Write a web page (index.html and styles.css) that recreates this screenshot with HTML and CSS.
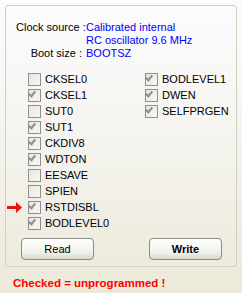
FILE: index.html
```html
<html lang="en">
<head>
    <meta charset="UTF-8">
    <title>Fuses</title>
    <link rel="stylesheet" href="styles.css">
</head>
<body>
    <div class="page">
        <div class="group">
            <div class="info">
                <span class="lbl">Clock source :</span>
                <span class="val">Calibrated internal<br>RC oscillator 9.6 MHz</span>
                <span class="lbl">Boot size :</span>
                <span class="val">BOOTSZ</span>
            </div>

            <div class="fuses">
                <div class="col">
                    <label class="fuse"><span class="box"></span>CKSEL0</label>
                    <label class="fuse"><span class="box on"></span>CKSEL1</label>
                    <label class="fuse"><span class="box"></span>SUT0</label>
                    <label class="fuse"><span class="box on"></span>SUT1</label>
                    <label class="fuse"><span class="box on"></span>CKDIV8</label>
                    <label class="fuse"><span class="box on"></span>WDTON</label>
                    <label class="fuse"><span class="box"></span>EESAVE</label>
                    <label class="fuse"><span class="box"></span>SPIEN</label>
                    <label class="fuse"><span class="box on"></span>RSTDISBL</label>
                    <label class="fuse"><span class="box on"></span>BODLEVEL0</label>
                </div>
                <div class="col">
                    <label class="fuse"><span class="box on"></span>BODLEVEL1</label>
                    <label class="fuse"><span class="box on"></span>DWEN</label>
                    <label class="fuse"><span class="box on"></span>SELFPRGEN</label>
                </div>
            </div>

            <div class="btns">
                <button class="btn">Read</button>
                <button class="btn bold">Write</button>
            </div>
        </div>

        <div class="note">Checked = unprogrammed !</div>

        <svg class="arrow" width="16" height="11" viewBox="0 0 16 11">
            <polygon points="0,4 9,4 9,0 15,5.5 9,11 9,7 0,7" fill="#ee1111"/>
        </svg>
    </div>
</body>
</html>
```

FILE: styles.css
```css
body{
    margin: 0;
    font-family: "Liberation Sans", Arial, sans-serif;
    font-size: 11px;
    color: #000;
}
.page{
    width: 242px;
    height: 293px;
    position: relative;
    background: linear-gradient(#fcfcfe, #f4f3ee 50%, #ece9d8);
    overflow: hidden;
}
.group{
    box-sizing: border-box;
    margin: 5px 5px 0 5px;
    height: 262px;
    border: 1px solid #d0d0bf;
    border-radius: 3px;
}
.info{
    display: grid;
    grid-template-columns: 66px auto;
    column-gap: 4px;
    padding: 15px 0 0 10px;
    line-height: 13px;
}
.lbl{
    text-align: right;
    white-space: nowrap;
}
.val{
    color: #0000ff;
}
.fuses{
    display: grid;
    grid-template-columns: 117px auto;
    margin-top: 11px;
    padding-left: 22px;
}
.fuse{
    display: flex;
    align-items: center;
    height: 16px;
    gap: 4px;
}
.box{
    box-sizing: border-box;
    width: 13px;
    height: 13px;
    border: 1px solid #8e8f8f;
    background: linear-gradient(135deg, #e6e5dd, #f8f8f4);
    position: relative;
}
.box.on::after{
    content: "";
    position: absolute;
    left: 2px;
    top: 1px;
    width: 5px;
    height: 3px;
    border-left: 2px solid #8c8c8c;
    border-bottom: 2px solid #8c8c8c;
    transform: translate(0.5px, 1.5px) rotate(-50deg);
    transform-origin: left bottom;
}
.btns{
    display: flex;
    gap: 55px;
    margin-top: 7px;
    padding-left: 15px;
}
.btn{
    width: 73px;
    height: 22px;
    padding: 0;
    font-family: "Liberation Sans", Arial, sans-serif;
    font-size: 11px;
    color: #000;
    border: 1px solid #8c8c88;
    border-radius: 4px;
    background: linear-gradient(#ffffff, #f0f0ea 70%, #d8d6cc);
}
.bold{
    font-weight: bold;
}
.note{
    margin: 10px 0 0 13px;
    line-height: 13px;
    color: #ff0000;
    font-weight: bold;
    font-size: 11.5px;
}
.arrow{
    position: absolute;
    left: 7px;
    top: 202px;
}
```
